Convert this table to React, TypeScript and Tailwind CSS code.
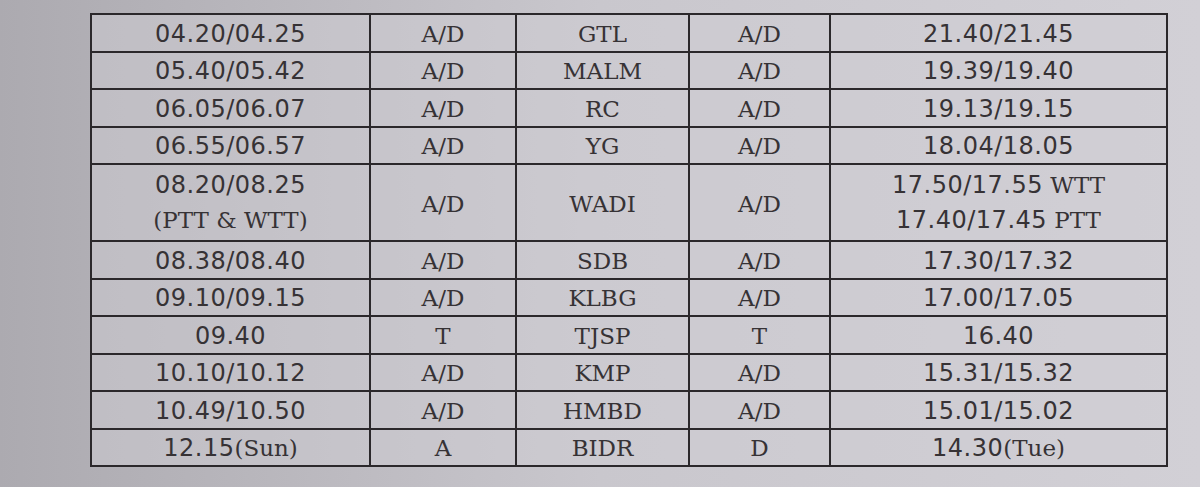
const rows: [string, string, string, string, string][] = [
  ['04.20/04.25', 'A/D', 'GTL', 'A/D', '21.40/21.45'],
  ['05.40/05.42', 'A/D', 'MALM', 'A/D', '19.39/19.40'],
  ['06.05/06.07', 'A/D', 'RC', 'A/D', '19.13/19.15'],
  ['06.55/06.57', 'A/D', 'YG', 'A/D', '18.04/18.05'],
  ['08.20/08.25|(PTT & WTT)', 'A/D', 'WADI', 'A/D', '17.50/17.55 WTT|17.40/17.45 PTT'],
  ['08.38/08.40', 'A/D', 'SDB', 'A/D', '17.30/17.32'],
  ['09.10/09.15', 'A/D', 'KLBG', 'A/D', '17.00/17.05'],
  ['09.40', 'T', 'TJSP', 'T', '16.40'],
  ['10.10/10.12', 'A/D', 'KMP', 'A/D', '15.31/15.32'],
  ['10.49/10.50', 'A/D', 'HMBD', 'A/D', '15.01/15.02'],
  ['12.15(Sun)', 'A', 'BIDR', 'D', '14.30(Tue)'],
];

const widths = ['w-[279px]', 'w-[146px]', 'w-[173px]', 'w-[141px]', 'w-[337px]'];

// digits print in a sans face, letters in a serif face (like the printed sheet)
function Mixed({ text }: { text: string }) {
  const parts = text.match(/[0-9.]+(?:\/[0-9.]+)?|[^0-9]+/g) ?? [text];
  return (
    <>
      {parts.map((p, i) =>
        /[0-9]/.test(p) ? (
          <span key={i} className="font-['DejaVu_Sans',sans-serif] text-[24px] tracking-[0.5px]">{p}</span>
        ) : (
          <span key={i}>{p}</span>
        )
      )}
    </>
  );
}

function Cell({ text, w }: { text: string; w: string }) {
  const lines = text.split('|');
  return (
    <td className={`${w} border-2 border-[#2b282b] text-center align-middle p-0`}>
      {lines.map((l, i) => (
        <div key={i} className={lines.length > 1 ? 'leading-[35px]' : 'leading-[30px] pt-[2px]'}>
          <Mixed text={l} />
        </div>
      ))}
    </td>
  );
}

export default function App() {
  return (
    <div className="w-[1200px] h-[487px] overflow-hidden bg-gradient-to-r from-[#acaab0] via-[#c9c7cd] to-[#d2d0d6] pt-[13px] pl-[90px] font-['DejaVu_Serif',serif] text-[23px] text-[#363235]">
      <table className="border-collapse bg-[#cfcdd3]/50">
        <tbody>
          {rows.map((r, i) => (
            <tr key={i} className={i === 4 ? 'h-[77px]' : 'h-[37.5px]'}>
              {r.map((c, j) => (
                <Cell key={j} text={c} w={widths[j]} />
              ))}
            </tr>
          ))}
        </tbody>
      </table>
    </div>
  );
}
